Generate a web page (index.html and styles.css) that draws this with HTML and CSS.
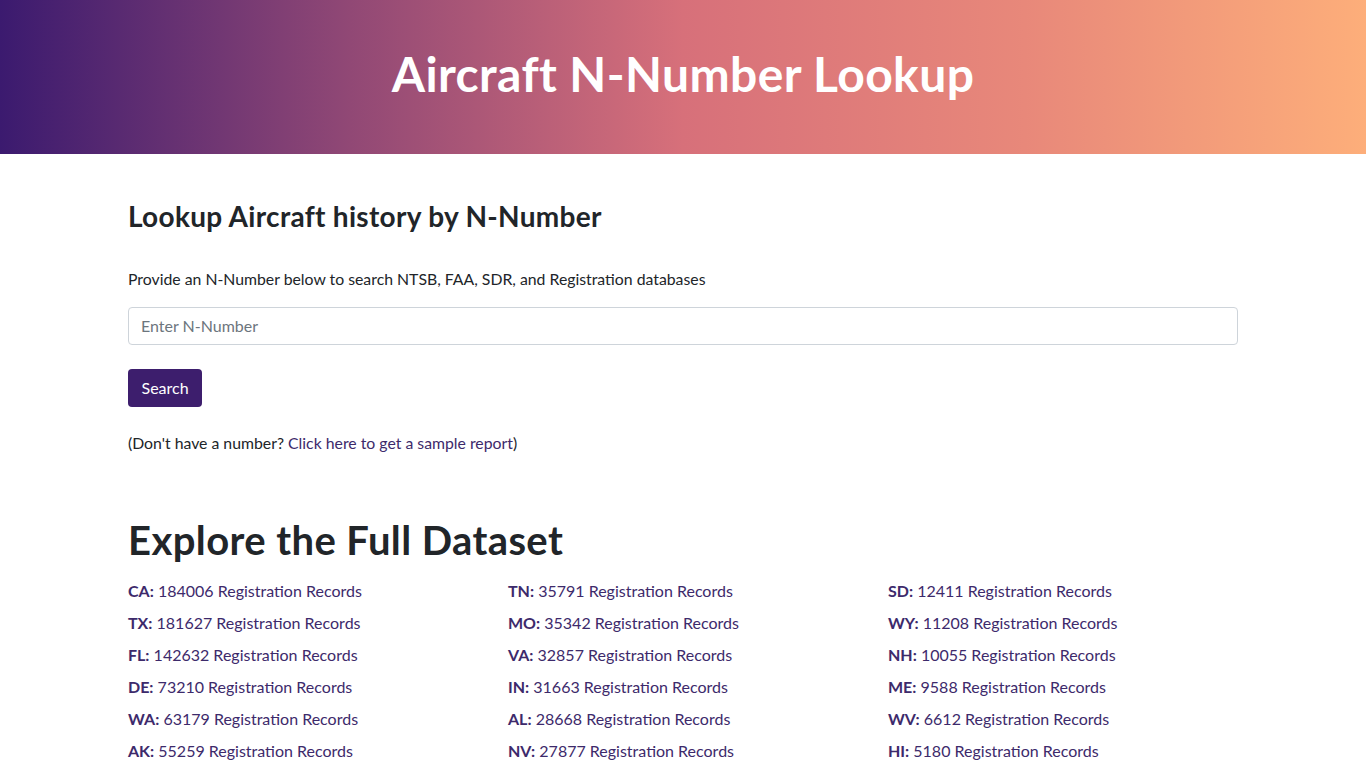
FILE: index.html
```html
<!DOCTYPE html>
<html lang="en">
<head>
<meta charset="utf-8">
<title>Aircraft N-Number Lookup</title>
<link rel="stylesheet" href="styles.css">
</head>
<body>
<header class="hero">
  <h1 class="hero-title">Aircraft N-Number Lookup</h1>
</header>
<main class="container">
  <h3 class="lookup-title">Lookup Aircraft history by N-Number</h3>
  <p class="intro">Provide an N-Number below to search NTSB, FAA, SDR, and Registration databases</p>
  <input class="nnum-input" type="text" placeholder="Enter N-Number">
  <button class="btn-search" type="button">Search</button>
  <p class="sample">(Don't have a number? <a href="#">Click here to get a sample report</a>)</p>
  <h2 class="explore-title">Explore the Full Dataset</h2>
  <div class="states">
    <div class="state-col">
      <a href="#"><b>CA:</b> 184006 Registration Records</a>
      <a href="#"><b>TX:</b> 181627 Registration Records</a>
      <a href="#"><b>FL:</b> 142632 Registration Records</a>
      <a href="#"><b>DE:</b> 73210 Registration Records</a>
      <a href="#"><b>WA:</b> 63179 Registration Records</a>
      <a href="#"><b>AK:</b> 55259 Registration Records</a>
    </div>
    <div class="state-col">
      <a href="#"><b>TN:</b> 35791 Registration Records</a>
      <a href="#"><b>MO:</b> 35342 Registration Records</a>
      <a href="#"><b>VA:</b> 32857 Registration Records</a>
      <a href="#"><b>IN:</b> 31663 Registration Records</a>
      <a href="#"><b>AL:</b> 28668 Registration Records</a>
      <a href="#"><b>NV:</b> 27877 Registration Records</a>
    </div>
    <div class="state-col">
      <a href="#"><b>SD:</b> 12411 Registration Records</a>
      <a href="#"><b>WY:</b> 11208 Registration Records</a>
      <a href="#"><b>NH:</b> 10055 Registration Records</a>
      <a href="#"><b>ME:</b> 9588 Registration Records</a>
      <a href="#"><b>WV:</b> 6612 Registration Records</a>
      <a href="#"><b>HI:</b> 5180 Registration Records</a>
    </div>
  </div>
</main>
</body>
</html>
```

FILE: styles.css
```css
* { box-sizing: border-box; }
body {
  margin: 0;
  font-family: Lato, "Open Sans", "Liberation Sans", sans-serif;
  font-size: 16px;
  line-height: 1.5;
  color: #212529;
  background: #fff;
}
.hero {
  height: 154px;
  display: flex;
  align-items: center;
  justify-content: center;
  padding-bottom: 6px;
  background: linear-gradient(to right, #3b1a6f 0%, #8f4775 25%, #d7707a 50%, #e8887a 75%, #fdae7a 100%);
}
.hero-title {
  margin: 0;
  color: #fff;
  font-size: 48px;
  font-weight: 700;
  line-height: 1.2;
  letter-spacing: 0.4px;
}
.container {
  width: 1110px;
  margin: 0 auto;
}
.lookup-title {
  margin: 46px 0 0;
  font-size: 28px;
  font-weight: 700;
  line-height: 1.2;
  letter-spacing: 0.3px;
}
.intro {
  margin: 33px 0 0;
  font-size: 15.8px;
  line-height: 24px;
}
.nnum-input {
  display: block;
  width: 100%;
  height: 38px;
  margin-top: 16px;
  padding: 6px 12px;
  border: 1px solid #ced4da;
  border-radius: 4px;
  font-family: inherit;
  font-size: 16px;
  color: #495057;
}
.nnum-input::placeholder { color: #6c757d; }
.btn-search {
  display: block;
  margin-top: 24px;
  height: 38px;
  padding: 0 13.5px;
  border: 0;
  border-radius: 4px;
  background: #3d1e6d;
  color: #fff;
  font-family: inherit;
  font-size: 16px;
}
.sample {
  margin: 24px 0 0;
  font-size: 15.8px;
  line-height: 24px;
}
a { color: #3d2a6b; text-decoration: none; }
.explore-title {
  margin: 61px 0 0;
  font-size: 40px;
  font-weight: 700;
  line-height: 1.2;
  letter-spacing: 0.4px;
}
.states {
  display: grid;
  grid-template-columns: repeat(3, 380px);
  margin-top: 15px;
}
.state-col {
  display: flex;
  flex-direction: column;
  gap: 8px;
}
.state-col a { line-height: 24px; }
.state-col b { font-weight: 700; }
```
